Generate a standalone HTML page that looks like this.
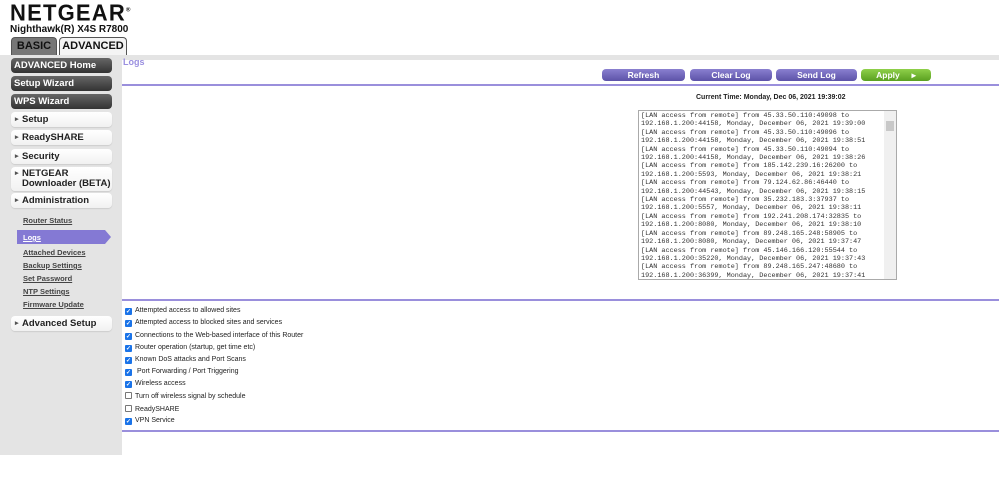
<!DOCTYPE html>
<html><head><meta charset="utf-8"><style>
*{margin:0;padding:0;box-sizing:border-box}
body{width:999px;height:481px;background:#fff;font-family:"Liberation Sans",Arial,sans-serif;position:relative;overflow:hidden}
.abs{position:absolute}
.logo{left:10px;top:0px;font-size:22px;font-weight:bold;letter-spacing:1.2px;color:#111;transform:scaleY(1.05)}
.model{left:10px;top:24px;font-size:10px;font-weight:bold;color:#111}
.tab{top:37px;height:18px;border:1px solid #555;border-bottom:none;border-radius:4px 4px 0 0;font-size:11px;font-weight:bold;text-align:center;line-height:17px;color:#111}
.band{left:0;top:55px;width:999px;height:5px;background:#e4e4e4}
.side{left:0;top:55px;width:122px;height:400px;background:#e4e4e4}
.dbtn{left:11px;width:101px;height:15px;background:linear-gradient(#666,#333);border-radius:4px;color:#fff;font-size:9.5px;font-weight:bold;line-height:15px;padding-left:3px}
.lbtn{left:11px;width:101px;background:linear-gradient(#fff,#f1f1f1);border-radius:4px;color:#222;font-size:9.5px;font-weight:bold;padding-left:11px;box-shadow:0 1px 1px #ccc}
.lbtn:before{content:"▸";position:absolute;left:4px;font-size:7px;color:#555}
.sub{left:23px;font-size:7.5px;font-weight:bold;color:#444;text-decoration:underline}
.hr{left:122px;width:877px;height:2px;background:#9a8fdc}
.btn{top:69px;height:12px;border-radius:4px;color:#fff;font-size:8.5px;font-weight:bold;text-align:center;line-height:12px;background:linear-gradient(#8a80d0,#5c52a8)}
.log{left:638px;top:110px;width:259px;height:170px;border:1px solid #aaa;font-family:"Liberation Mono",monospace;font-size:6.8px;line-height:8.4px;color:#333;padding:1px 0 0 2px;white-space:pre;overflow:hidden}
.sb{left:884px;top:111px;width:12px;height:168px;background:#f0f0f0}
.cb{left:125px;font-size:7px;color:#222}
.cb i{display:inline-block;width:7px;height:7px;border:1px solid #777;border-radius:1px;vertical-align:-1px;margin-right:3px;background:#fff;font-style:normal;color:#fff;font-size:6px;line-height:6px;text-align:center;font-weight:bold}
.cb i.on{background:#1a73e8;border-color:#1a73e8}
</style></head><body>
<div class="abs logo">NETGEAR<sup style="font-size:6px">®</sup></div>
<div class="abs model">Nighthawk(R) X4S R7800</div>
<div class="abs tab" style="left:11px;width:46px;background:#777;">BASIC</div>
<div class="abs tab" style="left:59px;width:68px;background:#f4f4f4;">ADVANCED</div>
<div class="abs band"></div>
<div class="abs side"></div>
<div class="abs dbtn" style="top:58px">ADVANCED Home</div>
<div class="abs dbtn" style="top:76px">Setup Wizard</div>
<div class="abs dbtn" style="top:94px">WPS Wizard</div>
<div class="abs lbtn" style="top:112px;height:15px;line-height:15px">Setup</div>
<div class="abs lbtn" style="top:130px;height:15px;line-height:15px">ReadySHARE</div>
<div class="abs lbtn" style="top:149px;height:15px;line-height:15px">Security</div>
<div class="abs lbtn" style="top:167px;height:24px;line-height:10px;padding-top:2px">NETGEAR<br>Downloader (BETA)</div>
<div class="abs lbtn" style="top:193px;height:15px;line-height:15px">Administration</div>
<div class="abs sub" style="top:216px">Router Status</div>
<div class="abs" style="left:17px;top:230px;width:88px;height:14px;background:#8479d4"></div>
<div class="abs" style="left:105px;top:230px;width:0;height:0;border-top:7px solid transparent;border-bottom:7px solid transparent;border-left:6px solid #8479d4"></div>
<div class="abs sub" style="top:233px;color:#fff">Logs</div>
<div class="abs sub" style="top:248px">Attached Devices</div>
<div class="abs sub" style="top:261px">Backup Settings</div>
<div class="abs sub" style="top:274px">Set Password</div>
<div class="abs sub" style="top:287px">NTP Settings</div>
<div class="abs sub" style="top:300px">Firmware Update</div>
<div class="abs lbtn" style="top:316px;height:15px;line-height:15px">Advanced Setup</div>
<div class="abs" style="left:123px;top:57px;font-size:9px;font-weight:bold;color:#9a8fe0">Logs</div>
<div class="abs btn" style="left:602px;width:83px">Refresh</div>
<div class="abs btn" style="left:690px;width:82px">Clear Log</div>
<div class="abs btn" style="left:776px;width:81px">Send Log</div>
<div class="abs btn" style="left:861px;width:70px;background:linear-gradient(#8fd04a,#5aa020)">Apply &nbsp;&nbsp;&nbsp;&nbsp;▸</div>
<div class="abs hr" style="top:84px"></div>
<div class="abs" style="left:696px;top:94px;font-size:7px;font-weight:bold;color:#222">Current Time: Monday, Dec 06, 2021 19:39:02</div>
<div class="abs log">[LAN access from remote] from 45.33.50.110:49098 to
192.168.1.200:44158, Monday, December 06, 2021 19:39:00
[LAN access from remote] from 45.33.50.110:49096 to
192.168.1.200:44158, Monday, December 06, 2021 19:38:51
[LAN access from remote] from 45.33.50.110:49094 to
192.168.1.200:44158, Monday, December 06, 2021 19:38:26
[LAN access from remote] from 185.142.239.16:26200 to
192.168.1.200:5593, Monday, December 06, 2021 19:38:21
[LAN access from remote] from 79.124.62.86:46440 to
192.168.1.200:44543, Monday, December 06, 2021 19:38:15
[LAN access from remote] from 35.232.183.3:37937 to
192.168.1.200:5557, Monday, December 06, 2021 19:38:11
[LAN access from remote] from 192.241.208.174:32835 to
192.168.1.200:8080, Monday, December 06, 2021 19:38:10
[LAN access from remote] from 89.248.165.248:58905 to
192.168.1.200:8080, Monday, December 06, 2021 19:37:47
[LAN access from remote] from 45.146.166.120:55544 to
192.168.1.200:35220, Monday, December 06, 2021 19:37:43
[LAN access from remote] from 89.248.165.247:48680 to
192.168.1.200:36399, Monday, December 06, 2021 19:37:41</div>
<div class="abs sb"><div style="margin:10px 2px;width:8px;height:10px;background:#c8c8c8"></div></div>
<div class="abs hr" style="top:299px"></div>
<div class="abs cb" style="top:307px"><i class="on">✓</i>Attempted access to allowed sites</div>
<div class="abs cb" style="top:319px"><i class="on">✓</i>Attempted access to blocked sites and services</div>
<div class="abs cb" style="top:332px"><i class="on">✓</i>Connections to the Web-based interface of this Router</div>
<div class="abs cb" style="top:344px"><i class="on">✓</i>Router operation (startup, get time etc)</div>
<div class="abs cb" style="top:356px"><i class="on">✓</i>Known DoS attacks and Port Scans</div>
<div class="abs cb" style="top:368px"><i class="on">✓</i> Port Forwarding / Port Triggering</div>
<div class="abs cb" style="top:380px"><i class="on">✓</i>Wireless access</div>
<div class="abs cb" style="top:392px"><i></i>Turn off wireless signal by schedule</div>
<div class="abs cb" style="top:405px"><i></i>ReadySHARE</div>
<div class="abs cb" style="top:417px"><i class="on">✓</i>VPN Service</div>
<div class="abs hr" style="top:430px"></div>
</body></html>
